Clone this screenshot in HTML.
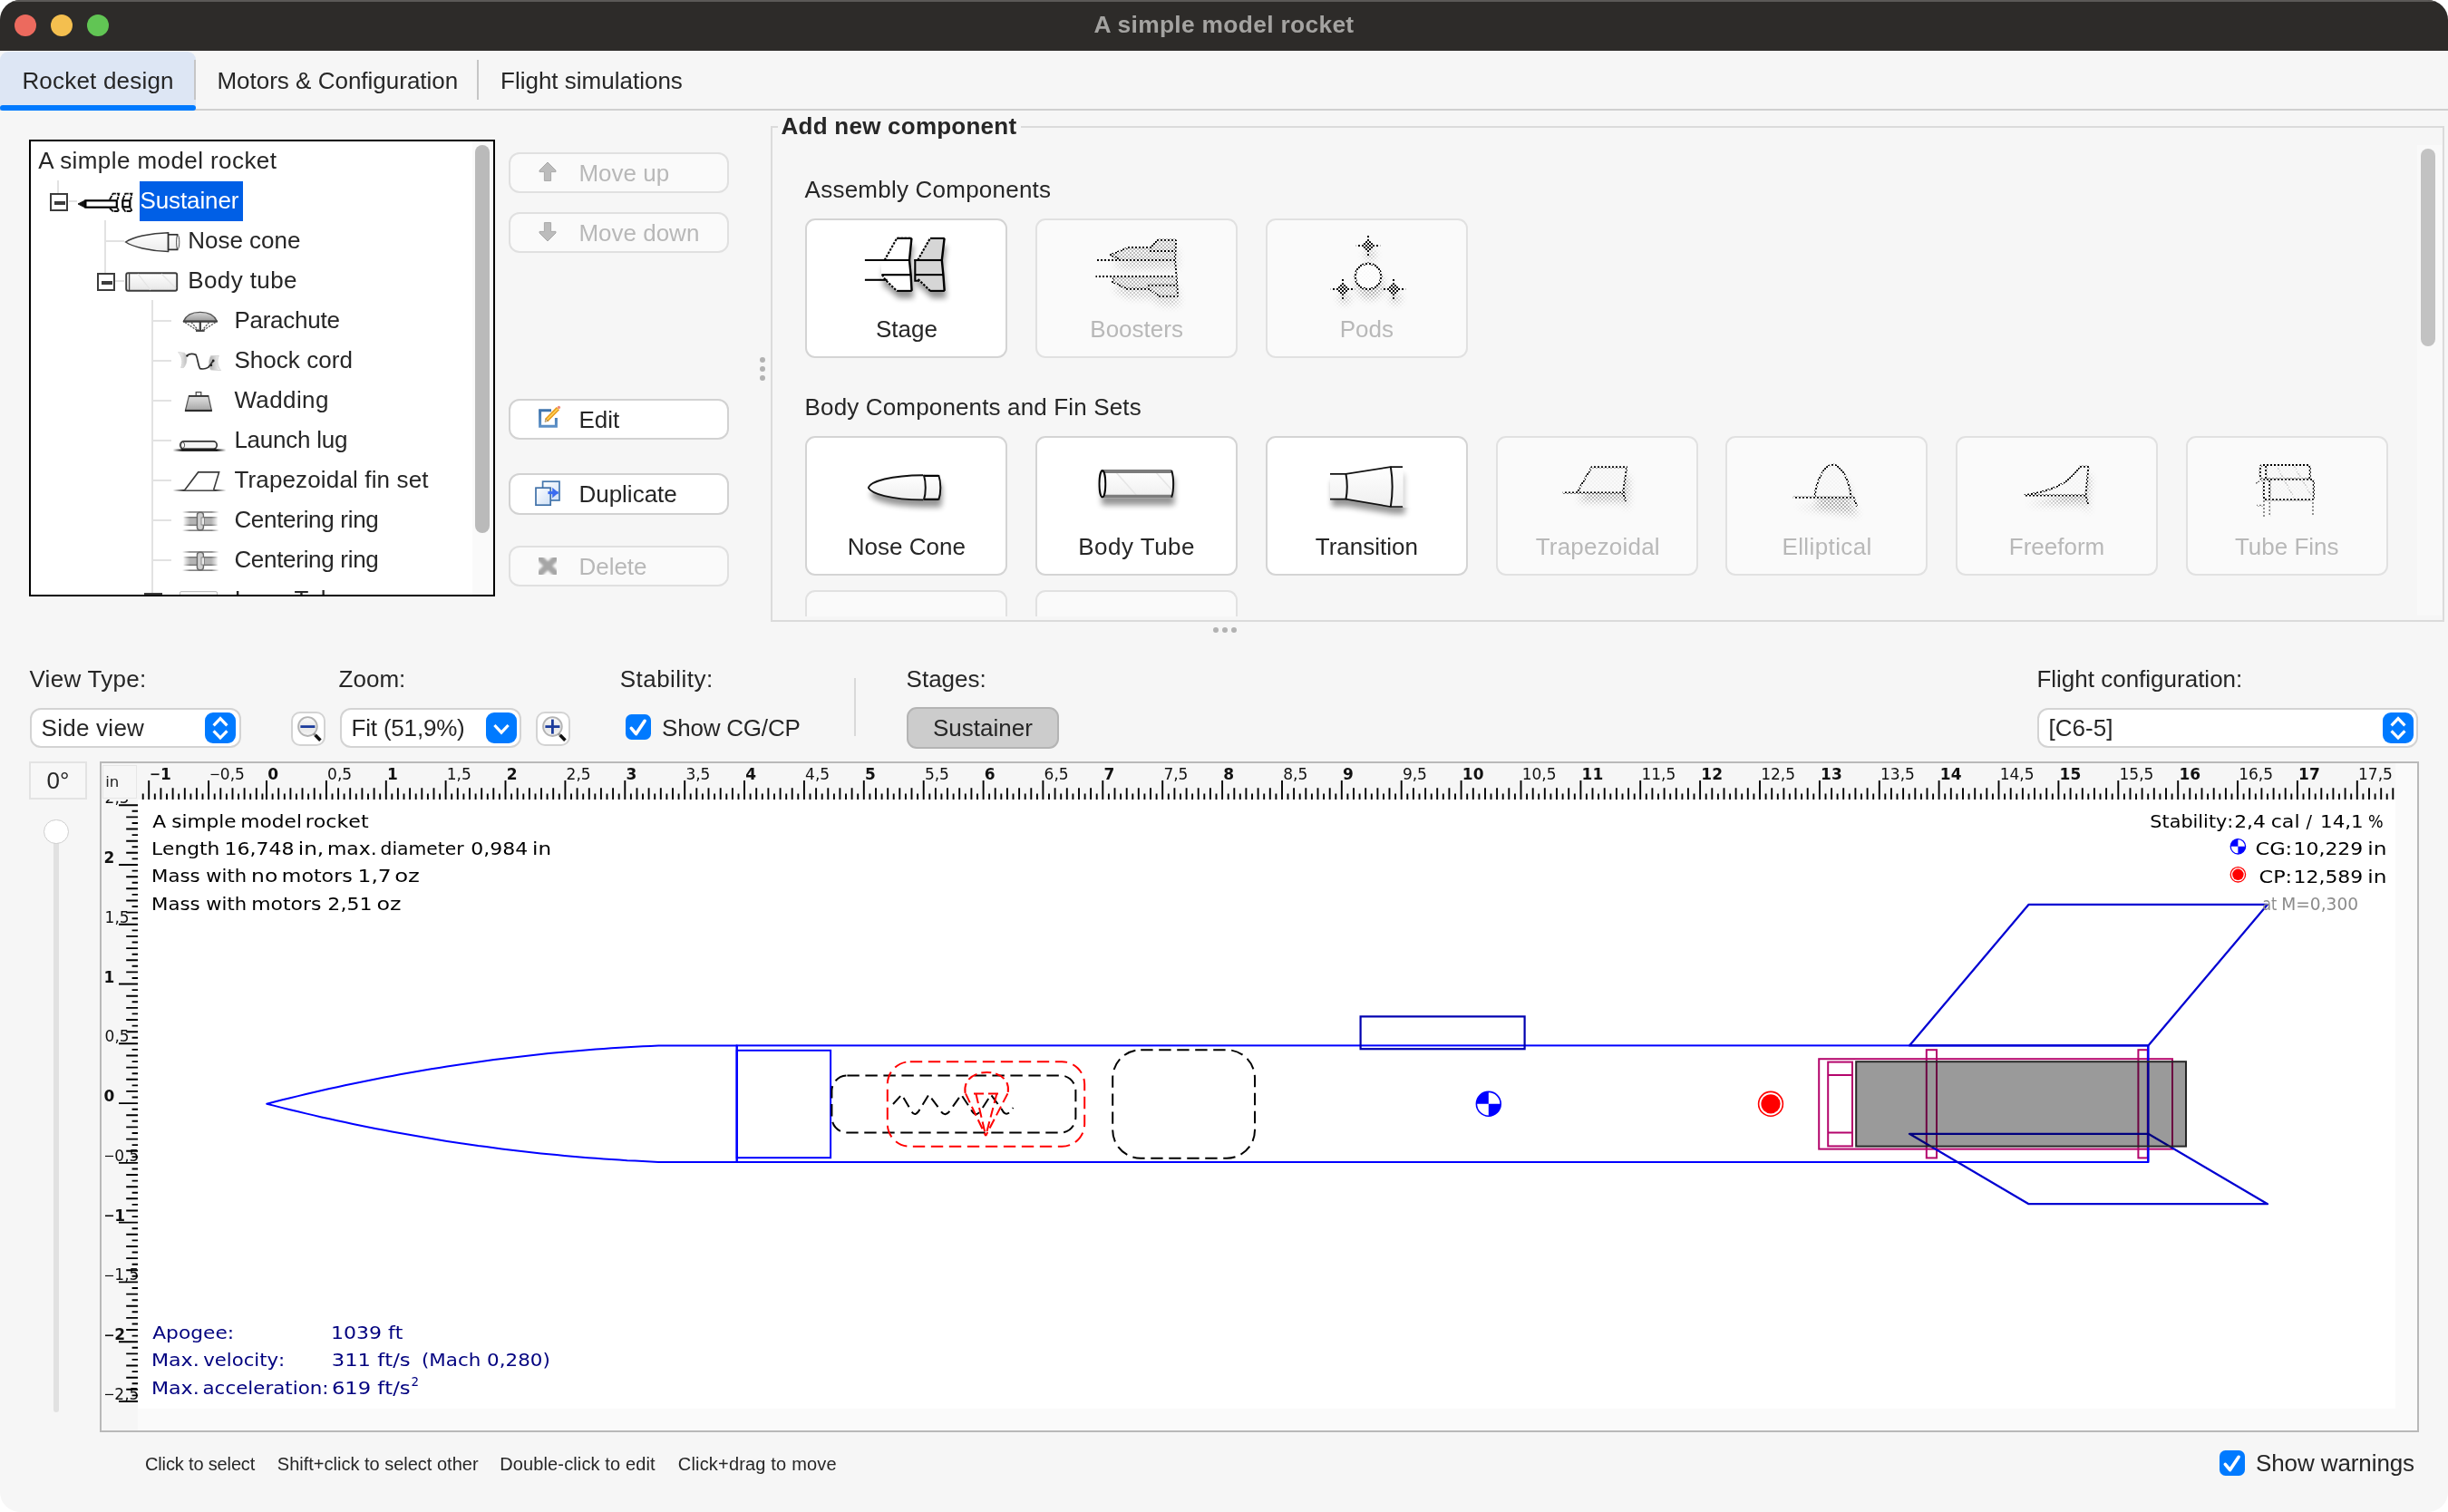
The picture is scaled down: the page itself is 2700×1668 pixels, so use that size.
<!DOCTYPE html>
<html lang="en"><head><meta charset="utf-8"><title>A simple model rocket</title>
<style>
*{box-sizing:border-box}
html,body{margin:0;padding:0}
body{width:2700px;height:1668px;background:#fff;overflow:hidden;position:relative;font-family:'Liberation Sans',sans-serif;color:#262626}
#win{will-change:transform;position:absolute;left:0;top:0;width:2700px;height:1668px;background:#f6f6f6;border-radius:22px;overflow:hidden}
.t{position:absolute;white-space:pre;line-height:1}
.abs{position:absolute}
svg{position:absolute;overflow:visible}
.btn{position:absolute;border:2px solid #d2d2d2;border-radius:12px;background:#fff}
.btn.dis{border-color:#e0e0e0;background:#fafafa}
.cbtn{position:absolute;border:2px solid #d4d4d4;border-radius:11px;background:#fff}
.cbtn.dis{border-color:#e1e1e1;background:#fafafa}
</style></head>
<body>
<div id="win">
<div class="abs" style="left:0;top:0;width:2700px;height:56px;background:#2d2b29"></div>
<div class="abs" style="left:0;top:0;width:2700px;height:1.5px;background:#5b5957"></div>
<div class="abs" style="left:15.8px;top:15.8px;width:24.4px;height:24.4px;border-radius:50%;background:#ec6a5e"></div>
<div class="abs" style="left:55.8px;top:15.8px;width:24.4px;height:24.4px;border-radius:50%;background:#f4bf4f"></div>
<div class="abs" style="left:95.8px;top:15.8px;width:24.4px;height:24.4px;border-radius:50%;background:#61c554"></div>
<div class="t" style="top:14.05px;font-size:26.4px;left:1050.00px;width:600px;text-align:center;color:#a4a3a1;font-weight:bold;letter-spacing:0.3px;">A simple model rocket</div>
<div class="abs" style="left:0;top:56.6px;width:216px;height:62px;background:#dde6f4;border-radius:9px 9px 0 0"></div>
<div class="abs" style="left:0;top:120.4px;width:2700px;height:1.6px;background:#d0d0d0"></div>
<div class="abs" style="left:0;top:115.8px;width:216px;height:6px;background:#007aff;border-radius:3px"></div>
<div class="abs" style="left:214px;top:66px;width:1.6px;height:43.5px;background:#c6c6c6"></div>
<div class="abs" style="left:526px;top:66px;width:1.6px;height:43.5px;background:#c6c6c6"></div>
<div class="t" style="top:75.89px;font-size:26px;left:24.40px;letter-spacing:0.2px;">Rocket design</div>
<div class="t" style="top:75.89px;font-size:26px;left:239.40px;">Motors &amp; Configuration</div>
<div class="t" style="top:75.89px;font-size:26px;left:552.00px;">Flight simulations</div>
<div class="abs" style="left:32px;top:154.3px;width:514px;height:503.5px;border:2px solid #000;background:#fff;overflow:hidden">
<div class="abs" style="left:-34px;top:-156.3px;width:2700px;height:1668px">
<div class="abs" style="left:521px;top:156px;width:23px;height:500px;background:#fafafa"></div>
<div class="abs" style="left:524px;top:160px;width:16px;height:427.5px;border-radius:8px;background:#bababa"></div>
<div class="abs" style="left:153.9px;top:199.9px;width:114px;height:44.4px;background:#005fe6"></div>
<div class="abs" style="left:63.2px;top:199.0px;width:1.6px;height:14.0px;background:#e2e2e2"></div>
<div class="abs" style="left:75.6px;top:221.0px;width:9.4px;height:1.6px;background:#e2e2e2"></div>
<div class="abs" style="left:115.2px;top:243.0px;width:1.6px;height:58.0px;background:#e2e2e2"></div>
<div class="abs" style="left:116.0px;top:265.0px;width:20.8px;height:1.6px;background:#e2e2e2"></div>
<div class="abs" style="left:127.4px;top:309.1px;width:9.4px;height:1.6px;background:#e2e2e2"></div>
<div class="abs" style="left:167.2px;top:331.4px;width:1.6px;height:328.6px;background:#e2e2e2"></div>
<div class="abs" style="left:168.0px;top:353.0px;width:20.8px;height:1.6px;background:#e2e2e2"></div>
<div class="abs" style="left:168.0px;top:397.0px;width:20.8px;height:1.6px;background:#e2e2e2"></div>
<div class="abs" style="left:168.0px;top:441.0px;width:20.8px;height:1.6px;background:#e2e2e2"></div>
<div class="abs" style="left:168.0px;top:485.0px;width:20.8px;height:1.6px;background:#e2e2e2"></div>
<div class="abs" style="left:168.0px;top:529.0px;width:20.8px;height:1.6px;background:#e2e2e2"></div>
<div class="abs" style="left:168.0px;top:573.0px;width:20.8px;height:1.6px;background:#e2e2e2"></div>
<div class="abs" style="left:168.0px;top:617.0px;width:20.8px;height:1.6px;background:#e2e2e2"></div>
<div class="abs" style="left:55.2px;top:213.0px;width:19.6px;height:19.6px;border:2px solid #3c3c3c;background:#fff"></div><div class="abs" style="left:60.0px;top:221.8px;width:12px;height:4.2px;background:#3c3c3c"></div>
<div class="abs" style="left:107.2px;top:301.2px;width:19.6px;height:19.6px;border:2px solid #3c3c3c;background:#fff"></div><div class="abs" style="left:112.0px;top:310.0px;width:12px;height:4.2px;background:#3c3c3c"></div>
<div class="abs" style="left:159.3px;top:653.8px;width:19.6px;height:19.6px;border:2px solid #3c3c3c;background:#fff"></div><div class="abs" style="left:164.1px;top:662.6px;width:12px;height:4.2px;background:#3c3c3c"></div>
<svg style="left:85px;top:210px" width="62" height="26" viewBox="85 210 62 26">
<path d="M86,225 L93.5,221.2 L93.5,228.8 Z" fill="#111" stroke="#111" stroke-width="1"/>
<rect x="94.4" y="221.3" width="34.4" height="7.4" fill="#fff" stroke="#000" stroke-width="2.2"/>
<path d="M121,220.3 L124.6,213.6 L131.2,213.6 L129.6,220.3 M121,229.7 L124.6,233 L131.2,233 L129.6,229.7" fill="none" stroke="#111" stroke-width="1.9" stroke-dasharray="5 0.9"/>
<rect x="135.3" y="221.3" width="8" height="7" fill="#fff" stroke="#000" stroke-width="2.2"/>
<path d="M135.4,220.3 L138.2,213.6 L145.4,213.6 L144,220.3 M135.4,229.4 L138.2,233 L145.4,233 L144,229.4" fill="none" stroke="#111" stroke-width="1.9" stroke-dasharray="5 0.9"/>
</svg>
<svg style="left:137px;top:254px" width="62" height="26" viewBox="137 254 62 26">
<defs><linearGradient id="gn" x1="0" y1="0" x2="0" y2="1"><stop offset="0" stop-color="#fff"/><stop offset="1" stop-color="#ececec"/></linearGradient></defs>
<path d="M138.6,267 C146,262 165,257 185.6,256.8 L185.6,277.4 C165,277 146,272 138.6,267 Z" fill="url(#gn)" stroke="#3a3a3a" stroke-width="1.5"/>
<rect x="185.6" y="258.8" width="10" height="16.6" fill="url(#gn)" stroke="#2e2e2e" stroke-width="1.7"/>
<ellipse cx="196.2" cy="267.1" rx="1.6" ry="7.6" fill="#f4f4f4" stroke="#555" stroke-width="1"/>
</svg>
<svg style="left:137px;top:298px" width="62" height="26" viewBox="137 298 62 26">
<defs><linearGradient id="gt" x1="0" y1="0" x2="0" y2="1"><stop offset="0" stop-color="#fff"/><stop offset="1" stop-color="#e6e6e6"/></linearGradient></defs>
<rect x="139.2" y="301.2" width="56" height="19.6" rx="2" fill="url(#gt)" stroke="#3c3c3c" stroke-width="1.9"/>
<path d="M152,302 L166,320 M178,302 L194,318" stroke="#e4e4e4" stroke-width="1.2" fill="none"/>
<path d="M142.6,301.6 L142.6,320.4" stroke="#4a4a4a" stroke-width="1.3"/>
</svg>
<svg style="left:200px;top:342px" width="42" height="26" viewBox="200 342 42 26">
<defs><linearGradient id="gc" x1="0" y1="0" x2="0" y2="1"><stop offset="0" stop-color="#d8d8d8"/><stop offset="1" stop-color="#9a9a9a"/></linearGradient></defs>
<path d="M202.4,354.4 C206,346 214,344.4 220.8,344.4 C227.6,344.4 235.6,346 239.4,354.4 Z" fill="url(#gc)" stroke="#555" stroke-width="1.3"/>
<path d="M202,354.6 L239.8,354.6" stroke="#3c3c3c" stroke-width="2.2"/>
<path d="M204,355.6 L217.6,364.6 M237.6,355.6 L224,364.6 M211,355.6 L219,364.6 M230.6,355.6 L222.8,364.6" stroke="#555" stroke-width="1.3" stroke-dasharray="2.2 1.2"/>
<path d="M220.8,355 L220.8,365" stroke="#3c3c3c" stroke-width="2.2"/>
<path d="M216,365 L225.6,365" stroke="#3c3c3c" stroke-width="1.8"/>
</svg>
<svg style="left:194px;top:386px" width="52" height="26" viewBox="194 386 52 26">
<defs><linearGradient id="gs1" x1="0" y1="0" x2="1" y2="0"><stop offset="0" stop-color="#fff"/><stop offset="1" stop-color="#bbb"/></linearGradient>
<linearGradient id="gs2" x1="0" y1="0" x2="1" y2="0"><stop offset="0" stop-color="#aaa"/><stop offset="1" stop-color="#fff"/></linearGradient></defs>
<path d="M196.6,388.6 L203.6,389.4 C207.6,394 206,402 202.4,405.6 L199.6,405.6 C202,400 201,393 196.6,388.6 Z" fill="url(#gs1)" stroke="#cfcfcf" stroke-width="0.8"/>
<path d="M232.6,392.6 L241.4,392.4 C239,397 239.6,404 243.6,408.6 L232.4,408 C230,403 230,397 232.6,392.6 Z" fill="url(#gs2)" stroke="#cfcfcf" stroke-width="0.8"/>
<path d="M206,392.4 C209,390 213,390.2 216,391.4 C218.4,396 218,402 220.6,406.6 C224,407.4 227,407 229.6,405.4 C232,402.6 234,400 235.4,397.4" fill="none" stroke="#333" stroke-width="1.7"/>
<circle cx="206.4" cy="392.6" r="1.2" fill="#222"/><circle cx="235.2" cy="398" r="1.4" fill="#222"/><circle cx="233" cy="403" r="1.2" fill="#222"/>
</svg>
<svg style="left:202px;top:430px" width="34" height="26" viewBox="202 430 34 26">
<defs><linearGradient id="gw" x1="0" y1="0" x2="0" y2="1"><stop offset="0" stop-color="#e4e4e4"/><stop offset="1" stop-color="#a4a4a4"/></linearGradient></defs>
<rect x="216.2" y="432.6" width="5.6" height="4.6" fill="#f4f4f4" stroke="#444" stroke-width="1.2"/>
<path d="M208.4,436.8 L229.8,436.8 L233.4,453 L204.4,453 Z" fill="url(#gw)" stroke="#555" stroke-width="1.2"/>
<path d="M208,436.9 L230.2,436.9" stroke="#333" stroke-width="1.8"/>
<path d="M204,453 L233.8,453" stroke="#2e2e2e" stroke-width="2.2"/>
</svg>
<svg style="left:189px;top:480px" width="62" height="20" viewBox="189 480 62 20">
<defs><linearGradient id="gl" x1="0" y1="0" x2="1" y2="0"><stop offset="0" stop-color="#000" stop-opacity="0"/><stop offset="0.18" stop-color="#000"/><stop offset="0.82" stop-color="#000"/><stop offset="1" stop-color="#000" stop-opacity="0"/></linearGradient></defs>
<rect x="190.6" y="495.4" width="58.8" height="2.4" fill="url(#gl)"/>
<rect x="198.8" y="486.9" width="40.4" height="8.4" rx="4" fill="#f4f4f4" stroke="#333" stroke-width="1.7"/>
<ellipse cx="201.6" cy="491.1" rx="2" ry="3.2" fill="#fff" stroke="#555" stroke-width="1"/>
<path d="M200,495.6 L238,495.6" stroke="#222" stroke-width="1.6"/>
</svg>
<svg style="left:189px;top:518px" width="62" height="26" viewBox="189 518 62 26">
<defs><linearGradient id="gf" x1="0" y1="0" x2="1" y2="0"><stop offset="0" stop-color="#333" stop-opacity="0"/><stop offset="0.2" stop-color="#333"/><stop offset="0.8" stop-color="#333"/><stop offset="1" stop-color="#333" stop-opacity="0"/></linearGradient></defs>
<rect x="190.6" y="540" width="58.8" height="1.9" fill="url(#gf)"/>
<path d="M203.8,540.6 L218.6,520.9 L241.6,520.9 L235.6,540.6" fill="#fff" stroke="#3a3a3a" stroke-width="1.6"/>
</svg>
<svg style="left:199px;top:562px" width="46" height="26" viewBox="199 562 46 26">
<defs><linearGradient id="gr562" x1="0" y1="0" x2="1" y2="0"><stop offset="0" stop-color="#777" stop-opacity="0"/><stop offset="0.2" stop-color="#777"/><stop offset="0.8" stop-color="#777"/><stop offset="1" stop-color="#777" stop-opacity="0"/></linearGradient>
<linearGradient id="gq562" x1="0" y1="0" x2="1" y2="0"><stop offset="0" stop-color="#aaa" stop-opacity="0"/><stop offset="0.2" stop-color="#b4b4b4"/><stop offset="0.8" stop-color="#b4b4b4"/><stop offset="1" stop-color="#aaa" stop-opacity="0"/></linearGradient></defs>
<rect x="201" y="564.2" width="40.6" height="1.5" fill="url(#gr562)"/>
<rect x="201" y="584.4" width="40.6" height="1.5" fill="url(#gr562)"/>
<rect x="202" y="570.2" width="38.6" height="9.4" fill="url(#gq562)"/>
<rect x="202" y="570" width="38.6" height="1.5" fill="url(#gr562)"/>
<rect x="202" y="578.6" width="38.6" height="1.5" fill="url(#gr562)"/>
<rect x="217.4" y="565.2" width="7" height="19.6" rx="3" fill="#cfcfcf" stroke="#6a6a6a" stroke-width="1.4"/>
<rect x="222" y="571" width="3.4" height="8" fill="#e8e8e8" stroke="#777" stroke-width="0.8"/>
</svg>
<svg style="left:199px;top:606px" width="46" height="26" viewBox="199 606 46 26">
<defs><linearGradient id="gr606" x1="0" y1="0" x2="1" y2="0"><stop offset="0" stop-color="#777" stop-opacity="0"/><stop offset="0.2" stop-color="#777"/><stop offset="0.8" stop-color="#777"/><stop offset="1" stop-color="#777" stop-opacity="0"/></linearGradient>
<linearGradient id="gq606" x1="0" y1="0" x2="1" y2="0"><stop offset="0" stop-color="#aaa" stop-opacity="0"/><stop offset="0.2" stop-color="#b4b4b4"/><stop offset="0.8" stop-color="#b4b4b4"/><stop offset="1" stop-color="#aaa" stop-opacity="0"/></linearGradient></defs>
<rect x="201" y="608.2" width="40.6" height="1.5" fill="url(#gr606)"/>
<rect x="201" y="628.4" width="40.6" height="1.5" fill="url(#gr606)"/>
<rect x="202" y="614.2" width="38.6" height="9.4" fill="url(#gq606)"/>
<rect x="202" y="614" width="38.6" height="1.5" fill="url(#gr606)"/>
<rect x="202" y="622.6" width="38.6" height="1.5" fill="url(#gr606)"/>
<rect x="217.4" y="609.2" width="7" height="19.6" rx="3" fill="#cfcfcf" stroke="#6a6a6a" stroke-width="1.4"/>
<rect x="222" y="615" width="3.4" height="8" fill="#e8e8e8" stroke="#777" stroke-width="0.8"/>
</svg>
<div class="abs" style="left:198px;top:652.4px;width:42px;height:10px;border:1.6px solid #bdbdbd;border-radius:2px;background:#f4f4f4"></div>
<div class="t" style="top:164.19px;font-size:26px;left:42.20px;letter-spacing:0.42px;">A simple model rocket</div>
<div class="t" style="top:208.19px;font-size:26px;left:154.40px;color:#fff;letter-spacing:-0.1px;">Sustainer</div>
<div class="t" style="top:252.19px;font-size:26px;left:207.20px;">Nose cone</div>
<div class="t" style="top:296.19px;font-size:26px;left:207.20px;letter-spacing:0.4px;">Body tube</div>
<div class="t" style="top:340.19px;font-size:26px;left:258.40px;letter-spacing:-0.25px;">Parachute</div>
<div class="t" style="top:384.19px;font-size:26px;left:258.40px;letter-spacing:0.05px;">Shock cord</div>
<div class="t" style="top:428.19px;font-size:26px;left:258.40px;letter-spacing:0.4px;">Wadding</div>
<div class="t" style="top:472.19px;font-size:26px;left:258.40px;letter-spacing:-0.25px;">Launch lug</div>
<div class="t" style="top:516.19px;font-size:26px;left:258.40px;letter-spacing:0.15px;">Trapezoidal fin set</div>
<div class="t" style="top:560.19px;font-size:26px;left:258.40px;letter-spacing:-0.3px;">Centering ring</div>
<div class="t" style="top:604.19px;font-size:26px;left:258.40px;letter-spacing:-0.3px;">Centering ring</div>
<div class="t" style="top:648.19px;font-size:26px;left:258.40px;">Inner Tube</div>
</div></div>
<div class="btn dis" style="left:560.5px;top:168.4px;width:243px;height:45.0px"></div>
<div class="btn dis" style="left:560.5px;top:234.3px;width:243px;height:44.89999999999998px"></div>
<div class="btn" style="left:560.5px;top:440.3px;width:243px;height:45.0px"></div>
<div class="btn" style="left:560.5px;top:522.4px;width:243px;height:45.200000000000045px"></div>
<div class="btn dis" style="left:560.5px;top:602.4px;width:243px;height:45.0px"></div>
<svg style="left:593px;top:178.3px" width="22" height="24" viewBox="-11 -1 22 24">
<path d="M0,0 L9,9 L9,10.6 L3.6,10.6 L3.6,20.4 L-3.6,20.4 L-3.6,10.6 L-9,10.6 L-9,9 Z" fill="#bcbcbc" stroke="#a9a9a9" stroke-width="1"/></svg>
<svg style="left:593px;top:242.8px" width="22" height="24" viewBox="-11 -23 22 24">
<path d="M0,0 L9,-9 L9,-10.6 L3.6,-10.6 L3.6,-20.4 L-3.6,-20.4 L-3.6,-10.6 L-9,-10.6 L-9,-9 Z" fill="#bcbcbc" stroke="#a9a9a9" stroke-width="1"/></svg>
<svg style="left:592px;top:446px" width="28" height="28" viewBox="592 446 28 28">
<defs><linearGradient id="ge" x1="0" y1="0" x2="0" y2="1"><stop offset="0" stop-color="#3f74ad"/><stop offset="1" stop-color="#5b8fc6"/></linearGradient></defs>
<path d="M608,452.8 L595.6,452.8 L595.6,470.2 L613.4,470.2 L613.4,461" fill="#fff" stroke="url(#ge)" stroke-width="3"/>
<path d="M602.6,463.6 L615.4,450.6" stroke="#e89a1c" stroke-width="4.6" stroke-linecap="butt"/>
<path d="M603.2,463 L615.2,451" stroke="#ffd45a" stroke-width="1.6"/>
<path d="M601,465.4 L604.4,464.4 L602,462 Z" fill="#f4d9a8" stroke="#8a6a3a" stroke-width="0.6"/>
<circle cx="616.4" cy="449.4" r="1.7" fill="#f08a7a"/>
</svg>
<svg style="left:588px;top:528px" width="32" height="32" viewBox="588 528 32 32">
<defs><linearGradient id="gd" x1="0" y1="0" x2="1" y2="1"><stop offset="0" stop-color="#ffffff"/><stop offset="1" stop-color="#cfe0f6"/></linearGradient></defs>
<rect x="598.6" y="531.2" width="18.4" height="20.8" fill="url(#gd)" stroke="#4577ad" stroke-width="1.7"/>
<rect x="591" y="538.2" width="16.2" height="19" fill="url(#gd)" stroke="#3f70a8" stroke-width="1.7"/>
<path d="M604.4,543.6 L615.6,543.6" stroke="#3a6cf0" stroke-width="3"/>
<path d="M609.2,537.8 L615.8,543.6 L609.2,549.4 Z" fill="#3a6cf0"/>
</svg>
<svg style="left:588px;top:608px" width="32" height="32" viewBox="588 608 32 32">
<defs><filter id="bl"><feGaussianBlur stdDeviation="1.1"/></filter></defs>
<path d="M596.4,616.6 L612,631.8 M612,616.6 L596.4,631.8" stroke="#a6a6a6" stroke-width="7" stroke-linecap="square" filter="url(#bl)"/>
</svg>
<div class="t" style="top:177.79px;font-size:26px;left:638.40px;color:#b8b8b8;">Move up</div>
<div class="t" style="top:243.59px;font-size:26px;left:638.40px;color:#b8b8b8;">Move down</div>
<div class="t" style="top:449.59px;font-size:26px;left:638.40px;">Edit</div>
<div class="t" style="top:531.79px;font-size:26px;left:638.40px;">Duplicate</div>
<div class="t" style="top:611.79px;font-size:26px;left:638.40px;color:#b8b8b8;">Delete</div>
<div class="abs" style="left:838px;top:394px;width:6px;height:6px;border-radius:50%;background:#b2b2b2"></div>
<div class="abs" style="left:838px;top:404px;width:6px;height:6px;border-radius:50%;background:#b2b2b2"></div>
<div class="abs" style="left:838px;top:414px;width:6px;height:6px;border-radius:50%;background:#b2b2b2"></div>
<div class="abs" style="left:1338px;top:692px;width:6px;height:6px;border-radius:50%;background:#b2b2b2"></div>
<div class="abs" style="left:1348px;top:692px;width:6px;height:6px;border-radius:50%;background:#b2b2b2"></div>
<div class="abs" style="left:1358px;top:692px;width:6px;height:6px;border-radius:50%;background:#b2b2b2"></div>
<svg width="0" height="0" style="left:0;top:0"><defs>
<pattern id="chk" x="0" y="0" width="4" height="4" patternUnits="userSpaceOnUse"><rect x="0" y="0" width="2" height="2" fill="#fff"/><rect x="2" y="2" width="2" height="2" fill="#fff"/></pattern>
<mask id="mchk" maskUnits="userSpaceOnUse" x="0" y="0" width="2700" height="1668"><rect x="0" y="0" width="2700" height="1668" fill="url(#chk)"/></mask>
<filter id="sh" x="-30%" y="-30%" width="160%" height="190%"><feGaussianBlur in="SourceAlpha" stdDeviation="3.2"/><feOffset dx="1.5" dy="7.5" result="o"/><feComponentTransfer><feFuncA type="linear" slope="0.42"/></feComponentTransfer><feMerge><feMergeNode/><feMergeNode in="SourceGraphic"/></feMerge></filter>
<filter id="shs" x="-30%" y="-30%" width="160%" height="220%"><feGaussianBlur in="SourceAlpha" stdDeviation="4"/><feOffset dx="1.5" dy="9.5"/><feComponentTransfer><feFuncA type="linear" slope="0.3"/></feComponentTransfer></filter>
<linearGradient id="gwh" x1="0" y1="0" x2="0" y2="1"><stop offset="0" stop-color="#fff"/><stop offset="1" stop-color="#efefef"/></linearGradient>
</defs></svg>
<div class="abs" style="left:850.4px;top:139.4px;width:1845.6px;height:546.6px;border:2px solid #dbdbdb"></div>
<div class="abs" style="left:858px;top:130px;width:268px;height:20px;background:#f6f6f6"></div>
<div class="t" style="top:125.79px;font-size:26px;left:861.60px;font-weight:bold;letter-spacing:0.24px;">Add new component</div>
<div class="t" style="top:195.99px;font-size:26px;left:887.60px;letter-spacing:0.23px;">Assembly Components</div>
<div class="t" style="top:436.39px;font-size:26px;left:887.60px;letter-spacing:0.15px;">Body Components and Fin Sets</div>
<div class="abs" style="left:2666px;top:160px;width:26.5px;height:519px;background:#f9f9f9"></div>
<div class="abs" style="left:2670px;top:163.8px;width:16px;height:218.4px;border-radius:8px;background:#c2c2c2"></div>
<div class="cbtn" style="left:888.4px;top:240.7px;width:223.0px;height:154.60000000000002px;"></div>
<div class="t" style="top:349.59px;font-size:26px;left:699.90px;width:600px;text-align:center;">Stage</div>
<div class="cbtn dis" style="left:1142.1px;top:240.7px;width:223.0px;height:154.60000000000002px;"></div>
<div class="t" style="top:349.59px;font-size:26px;left:953.62px;width:600px;text-align:center;color:#b8b8b8;">Boosters</div>
<div class="cbtn dis" style="left:1395.8px;top:240.7px;width:223.0px;height:154.60000000000002px;"></div>
<div class="t" style="top:349.59px;font-size:26px;left:1207.34px;width:600px;text-align:center;color:#b8b8b8;">Pods</div>
<div class="cbtn" style="left:888.4px;top:480.7px;width:223.0px;height:154.00000000000006px;"></div>
<div class="t" style="top:589.89px;font-size:26px;left:699.90px;width:600px;text-align:center;">Nose Cone</div>
<div class="cbtn" style="left:1142.1px;top:480.7px;width:223.0px;height:154.00000000000006px;"></div>
<div class="t" style="top:589.89px;font-size:26px;left:953.62px;width:600px;text-align:center;letter-spacing:0.5px;">Body Tube</div>
<div class="cbtn" style="left:1395.8px;top:480.7px;width:223.0px;height:154.00000000000006px;"></div>
<div class="t" style="top:589.89px;font-size:26px;left:1207.34px;width:600px;text-align:center;">Transition</div>
<div class="cbtn dis" style="left:1649.6px;top:480.7px;width:223.0px;height:154.00000000000006px;"></div>
<div class="t" style="top:589.89px;font-size:26px;left:1462.26px;width:600px;text-align:center;color:#b8b8b8;letter-spacing:0.2px;">Trapezoidal</div>
<div class="cbtn dis" style="left:1903.3px;top:480.7px;width:223.0px;height:154.00000000000006px;"></div>
<div class="t" style="top:589.89px;font-size:26px;left:1715.08px;width:600px;text-align:center;color:#b8b8b8;letter-spacing:0.4px;">Elliptical</div>
<div class="cbtn dis" style="left:2157.0px;top:480.7px;width:223.0px;height:154.00000000000006px;"></div>
<div class="t" style="top:589.89px;font-size:26px;left:1968.50px;width:600px;text-align:center;color:#b8b8b8;">Freeform</div>
<div class="cbtn dis" style="left:2410.7px;top:480.7px;width:223.0px;height:154.00000000000006px;"></div>
<div class="t" style="top:589.89px;font-size:26px;left:2222.22px;width:600px;text-align:center;color:#b8b8b8;">Tube Fins</div>
<div class="cbtn dis" style="left:888.4px;top:651px;width:223.0px;height:28.5px;border-radius:11px 11px 0 0;border-bottom:none;"></div>
<div class="cbtn dis" style="left:1142.1px;top:651px;width:223.0px;height:28.5px;border-radius:11px 11px 0 0;border-bottom:none;"></div>
<svg style="left:940px;top:250px" width="120" height="100" viewBox="940 250 120 100"><g filter="url(#sh)">
<path d="M972,287 H1003 L1004.6,303.1 L1005.7,320.9 H989.2 L975,308.8 H972 Z" fill="#fff"/>
<path d="M975.6,287 L989.2,262.9 H1005.7 L1003,287 Z" fill="#fff"/>
<path d="M1009.2,287 H1012 L1025.9,262.9 H1041.8 L1038.8,287 L1040.4,303.1 L1041.8,320.9 H1026 L1013,308.8 H1009.2 Z" fill="#d6d6d6"/>
</g>
<g stroke="#000" stroke-width="2.1" fill="none" stroke-linejoin="miter">
<path d="M953.9,287 H1003.6"/><path d="M972.4,303.1 H1004.4"/><path d="M953.9,308.8 H978.6"/>
<path d="M975.6,287 L989.2,262.9 H1005.6" stroke-dasharray="2.6 1.4"/>
<path d="M989.2,262.9 H1005.6"/>
<path d="M1005.4,262.9 L1003,287 L1004.6,303.1 L1005.6,320.9" stroke-width="2.4"/>
<path d="M973,303.1 L976.4,308.6 L989.2,320.9" stroke-dasharray="2.6 1.4"/>
<path d="M989.2,320.9 H1005.7"/>
<path d="M1012.2,287 L1025.9,262.9" stroke-dasharray="2.6 1.4"/>
<path d="M1025.9,262.9 H1041.8"/>
<path d="M1041.6,262.9 L1038.8,287 L1040.4,303.1 L1041.7,320.9" stroke-width="2.4"/>
<path d="M1008.4,287 H1039"/><path d="M1009.4,303.1 H1040.4"/>
<path d="M1009.3,286 V309.8 H1014" />
<path d="M1012.6,308 L1026,320.9" stroke-dasharray="2.6 1.4"/>
<path d="M1026,320.9 H1041.8"/>
</g></svg>
<svg style="left:1195px;top:250px" width="130" height="100" viewBox="1195 250 130 100"><g mask="url(#mchk)"><g filter="url(#shs)" opacity="0.7"><path d="M1236.3,287 L1224.7,281 L1244.9,272.9 H1269.4 L1276.6,264.8 H1297.1 V287 Z M1215,305 H1229 L1226.7,310.8 L1242.9,318.7 H1267.4 L1278.6,327 H1299.1 L1297,305 Z" fill="#000"/></g>
<path d="M1236.3,287 L1224.7,281 L1244.9,272.9 H1269.4 L1276.6,264.8 H1297.1 V287 Z" fill="#bdbdbd"/>
<path d="M1229,305 L1226.7,310.8 L1242.9,318.7 H1267.4 L1278.6,327 H1299.1 L1297,305 Z" fill="#bdbdbd"/>
<g stroke="#000" stroke-width="2" fill="none">
<path d="M1209.8,287 H1295.6"/>
<path d="M1236.3,287 L1224.7,281 L1244.9,272.9 H1269.4 L1276.6,264.8 H1297.1"/>
<path d="M1269.4,272.9 L1268.7,277.1 H1297"/>
<path d="M1297.1,264.8 L1296,287 L1297.6,305 L1299.1,327"/>
<path d="M1208.5,305 H1294"/>
<path d="M1229,305 L1226.7,310.8 L1242.9,318.7 H1267.4 L1278.6,327 H1299.1"/>
<path d="M1267.4,318.7 L1266.7,314.8 H1297.4"/>
</g></g></svg>
<svg style="left:1455px;top:250px" width="110" height="100" viewBox="1455 250 110 100"><g mask="url(#mchk)"><g filter="url(#shs)"><circle cx="1509" cy="304.9" r="15" fill="#000"/><circle cx="1509" cy="270.9" r="6" fill="#000"/><circle cx="1481" cy="318.9" r="6" fill="#000"/><circle cx="1537.1" cy="318.9" r="6" fill="#000"/></g>
<g stroke="#000" stroke-width="2" fill="none"><circle cx="1509" cy="271" r="4.4" fill="#d0d0d0" stroke-width="2.2"/><path d="M1495.8,271 H1522.2 M1509,258 V284"/><circle cx="1481" cy="319" r="4.4" fill="#d0d0d0" stroke-width="2.2"/><path d="M1467.8,319 H1494.2 M1481,306 V332"/><circle cx="1537" cy="319" r="4.4" fill="#d0d0d0" stroke-width="2.2"/><path d="M1523.8,319 H1550.2 M1537,306 V332"/>
<circle cx="1509" cy="304.9" r="14.2" fill="#fff" stroke-width="2.4"/></g></g></svg>
<svg style="left:945px;top:505px" width="110" height="80" viewBox="945 505 110 80"><g filter="url(#sh)">
<path d="M957.6,537.8 C961,531 982,524.4 1018.3,524.2 H1035.6 C1037.6,531 1037.6,545 1035.6,551.4 H1018.3 C982,551.2 961,544.6 957.6,537.8 Z" fill="url(#gwh)"/></g>
<path d="M957.6,537.8 C961,531 982,524.4 1018.3,524.2 M957.6,537.8 C961,544.6 982,551.2 1018.3,551.4" fill="none" stroke="#111" stroke-width="1.9"/>
<path d="M1018.8,524.9 H1035 M1018.8,550.8 H1035" stroke="#000" stroke-width="2.2" fill="none"/>
<path d="M1018.9,524 C1021.4,532 1021.4,544 1018.9,551.6" stroke="#111" stroke-width="2" fill="none"/>
<path d="M1035.2,524 C1038,532 1038,544 1035.2,551.6" stroke="#111" stroke-width="2" fill="none"/></svg>
<svg style="left:1195px;top:500px" width="120" height="80" viewBox="1195 500 120 80"><g filter="url(#sh)"><rect x="1213" y="518.4" width="80.4" height="30.8" rx="2" fill="url(#gwh)"/></g>
<path d="M1230,520 L1254,547 M1274,520 L1292,540" stroke="#e6e6e6" stroke-width="1.6" fill="none"/>
<path d="M1214.4,520 H1292.4 M1214.4,547.6 H1292.4" stroke="#7c7c7c" stroke-width="3.8" fill="none"/>
<ellipse cx="1215.9" cy="533.8" rx="3.4" ry="14.6" fill="#f4f4f4" stroke="#000" stroke-width="1.9"/>
<path d="M1292.2,519 C1294.8,527 1294.8,541 1292.2,548.6" stroke="#111" stroke-width="2" fill="none"/></svg>
<svg style="left:1450px;top:495px" width="130" height="90" viewBox="1450 495 130 90"><g filter="url(#sh)"><path d="M1467,522.9 H1484 L1534,515.1 H1547.6 V559 H1534 L1484,550.7 H1467 Z" fill="url(#gwh)"/></g>
<path d="M1547.8,514 V560 H1560 V514 Z" fill="#fff" opacity="0.55"/>
<g stroke="#111" stroke-width="1.7" fill="none">
<path d="M1467,522.9 H1484.4 L1533.6,515.1 H1547"/>
<path d="M1467,550.7 H1484.4 L1533.6,559 H1547"/>
<path d="M1484.4,522.4 C1486,531 1486,543 1484.4,551.2" stroke-width="2"/>
<path d="M1533.8,514.6 C1536,528 1536,546 1533.8,559.4" stroke-width="2"/>
</g></svg>
<svg style="left:1710px;top:500px" width="110" height="80" viewBox="1710 500 110 80"><g mask="url(#mchk)"><g filter="url(#shs)"><path d="M1723.7,543.6 H1739.2 L1755.6,515.3 H1794.8 L1793.4,553 L1789,543.6 Z" fill="#000"/></g>
<path d="M1739.2,543.6 L1755.6,515.3 H1794.8 L1789,543.6 Z" fill="#f2f2f2"/>
<g stroke="#000" stroke-width="2" fill="none">
<path d="M1723.7,543.6 H1793"/><path d="M1739.2,543.6 L1755.6,515.3 H1794.8"/><path d="M1794.2,515.3 L1790,543.6 L1793.2,553"/></g></g></svg>
<svg style="left:1965px;top:500px" width="110" height="80" viewBox="1965 500 110 80"><g mask="url(#mchk)"><g filter="url(#shs)"><path d="M1977.8,548.8 H2001.5 C2003,530 2012,513 2021.4,512.5 C2031,513 2040,530 2041.5,548.8 L2048,558.6 Z" fill="#000"/></g>
<path d="M2001.5,548.8 C2003,530 2012,513 2021.4,512.5 C2031,513 2040,530 2041.5,548.8 Z" fill="#f4f4f4"/>
<g stroke="#000" stroke-width="2" fill="none">
<path d="M1977.8,548.8 H2044.4 L2048,558.6"/><path d="M2001.5,548.8 C2003,530 2012,513 2021.4,512.5 C2031,513 2040,530 2041.5,548.8"/></g></g></svg>
<svg style="left:2220px;top:500px" width="110" height="80" viewBox="2220 500 110 80"><g mask="url(#mchk)"><g filter="url(#shs)"><path d="M2232.7,546.4 C2262,542 2282,534 2294,514.8 H2303.8 L2300.6,546.4 L2303,556.2 L2296,546.4 Z" fill="#000"/></g>
<path d="M2232.7,546.4 C2262,542 2282,534 2294,514.8 H2303.8 L2300.6,546.4 Z" fill="#f4f4f4"/>
<g stroke="#000" stroke-width="2" fill="none">
<path d="M2232.7,546.4 H2300"/><path d="M2232.7,546.4 C2262,542 2282,534 2294,514.8 H2303.8"/><path d="M2303.4,514.8 L2300.4,546.4 L2303,556.2"/></g></g></svg>
<svg style="left:2480px;top:500px" width="110" height="80" viewBox="2480 500 110 80"><g mask="url(#mchk)"><g stroke="#000" stroke-width="2" fill="#f4f4f4">
<rect x="2492.8" y="512.9" width="55" height="15.8" rx="3"/>
<rect x="2496.8" y="528.7" width="55" height="22.6" rx="3"/>
<path d="M2499.2,513 V528.7 M2503.3,529 V551.3" fill="none"/>
</g>
<g stroke="#777" stroke-width="1.6" fill="none"><path d="M2497,551.3 V570 M2503.3,551.3 V570 M2551,551.3 V570 M2487.6,533.3 L2497,528.7 M2489,557.6 H2497"/>
<path d="M2512,516 L2530,549 M2530,514 L2549,546" stroke="#ccc"/></g></g></svg>
<div class="t" style="top:736.19px;font-size:26px;left:32.40px;letter-spacing:0.3px;">View Type:</div>
<div class="t" style="top:736.19px;font-size:26px;left:373.60px;">Zoom:</div>
<div class="t" style="top:736.19px;font-size:26px;left:683.80px;letter-spacing:0.45px;">Stability:</div>
<div class="t" style="top:736.19px;font-size:26px;left:999.60px;">Stages:</div>
<div class="t" style="top:736.19px;font-size:26px;left:2246.40px;">Flight configuration:</div>
<div class="abs" style="left:32.6px;top:780.6px;width:233.00000000000003px;height:44.60000000000002px;border:2px solid #d3d3d3;border-radius:12px;background:#fff"></div>
<div class="abs" style="left:226.20000000000005px;top:786px;width:34px;height:33.8px;border-radius:9px;background:#007aff"></div>
<svg style="left:226.20000000000005px;top:786px" width="34" height="34" viewBox="226.20000000000005 786 34 34"><path d="M235.80000000000004,800.3 L243.20000000000005,792.6 L250.60000000000005,800.3 M235.80000000000004,806.3 L243.20000000000005,814 L250.60000000000005,806.3" fill="none" stroke="#fff" stroke-width="3.2"/></svg>
<div class="t" style="top:789.79px;font-size:26px;left:45.60px;letter-spacing:0.25px;">Side view</div>
<div class="abs" style="left:320.7px;top:784.6px;width:38.6px;height:38.6px;border:2px solid #d3d3d3;border-radius:10px;background:#fff"></div>
<svg style="left:320.7px;top:784px" width="40" height="40" viewBox="320.7 784 40 40">
<defs><linearGradient id="gz320" x1="0" y1="0" x2="0" y2="1"><stop offset="0" stop-color="#fdfdfd"/><stop offset="0.55" stop-color="#e6e6e6"/><stop offset="1" stop-color="#f6f6f6"/></linearGradient></defs>
<circle cx="339.09999999999997" cy="801.6" r="10.4" fill="url(#gz320)" stroke="#b4b4b4" stroke-width="1.8"/>
<rect x="331.09999999999997" y="800.2" width="16" height="2.8" fill="#1c3c9c"/>
<path d="M345.7,809.2 L348.09999999999997,811.6" stroke="#999" stroke-width="3"/>
<path d="M347.49999999999994,811.0 L353.09999999999997,816.8000000000001" stroke="#111" stroke-width="3.6"/>
</svg>
<div class="abs" style="left:374.6px;top:780.6px;width:200.79999999999995px;height:44.60000000000002px;border:2px solid #d3d3d3;border-radius:12px;background:#fff"></div>
<div class="abs" style="left:536.0px;top:786px;width:34px;height:33.8px;border-radius:9px;background:#007aff"></div>
<svg style="left:536.0px;top:786px" width="34" height="34" viewBox="536.0 786 34 34"><path d="M545.4,800 L553.0,808.2 L560.6,800" fill="none" stroke="#fff" stroke-width="3.2"/></svg>
<div class="t" style="top:789.79px;font-size:26px;left:387.60px;letter-spacing:-0.2px;">Fit (51,9%)</div>
<div class="abs" style="left:590.6px;top:784.6px;width:38.6px;height:38.6px;border:2px solid #d3d3d3;border-radius:10px;background:#fff"></div>
<svg style="left:590.6px;top:784px" width="40" height="40" viewBox="590.6 784 40 40">
<defs><linearGradient id="gz590" x1="0" y1="0" x2="0" y2="1"><stop offset="0" stop-color="#fdfdfd"/><stop offset="0.55" stop-color="#e6e6e6"/><stop offset="1" stop-color="#f6f6f6"/></linearGradient></defs>
<circle cx="609.0" cy="801.6" r="10.4" fill="url(#gz590)" stroke="#b4b4b4" stroke-width="1.8"/>
<rect x="601.0" y="800.2" width="16" height="2.8" fill="#1c3c9c"/><rect x="607.6" y="793.6" width="2.8" height="16" fill="#1c3c9c"/>
<path d="M615.6,809.2 L618.0,811.6" stroke="#999" stroke-width="3"/>
<path d="M617.4,811.0 L623.0,816.8000000000001" stroke="#111" stroke-width="3.6"/>
</svg>
<div class="abs" style="left:689.8px;top:787.7px;width:28.2px;height:28.2px;border-radius:6.5px;background:#007aff"></div>
<svg style="left:689.8px;top:787.7px" width="28" height="28" viewBox="0 0 28 28"><path d="M6.3,15.4 L11.6,21.6 L21.1,7.3" fill="none" stroke="#fff" stroke-width="3.6" stroke-linecap="round" stroke-linejoin="round"/></svg>
<div class="t" style="top:789.99px;font-size:26px;left:730.00px;letter-spacing:-0.2px;">Show CG/CP</div>
<div class="abs" style="left:942.4px;top:748px;width:1.8px;height:64px;background:#d9d9d9"></div>
<div class="abs" style="left:1000.2px;top:780.4px;width:167.4px;height:45.4px;border:2px solid #b4b4b4;border-radius:11px;background:#cccccc"></div>
<div class="t" style="top:789.99px;font-size:26px;left:783.90px;width:600px;text-align:center;">Sustainer</div>
<div class="abs" style="left:2246.6px;top:780.6px;width:420.8000000000002px;height:44.60000000000002px;border:2px solid #d3d3d3;border-radius:12px;background:#fff"></div>
<div class="abs" style="left:2628.0px;top:786px;width:34px;height:33.8px;border-radius:9px;background:#007aff"></div>
<svg style="left:2628.0px;top:786px" width="34" height="34" viewBox="2628.0 786 34 34"><path d="M2637.6,800.3 L2645.0,792.6 L2652.4,800.3 M2637.6,806.3 L2645.0,814 L2652.4,806.3" fill="none" stroke="#fff" stroke-width="3.2"/></svg>
<div class="t" style="top:789.79px;font-size:26px;left:2259.60px;">[C6-5]</div>
<div class="abs" style="left:110px;top:840px;width:2557.8px;height:740px;border:2px solid #b9b9b9;background:#fafafa"></div>
<div class="abs" style="left:112.2px;top:842.2px;width:2530px;height:40px;background:#f6f6f6"></div>
<div class="abs" style="left:112.2px;top:842.2px;width:40px;height:735.6px;background:#f6f6f6"></div>
<div class="abs" style="left:152px;top:882px;width:2490.2px;height:672px;background:#fff"></div>
<div class="abs" style="left:113px;top:843.6px;width:38px;height:37px;border:1.6px solid #e6e6e6;background:#f6f6f6"></div>
<div class="abs" style="left:32px;top:840px;width:63.8px;height:42px;border:2px solid #e3e3e3;background:#f7f7f7"></div>
<div class="t" style="top:847.59px;font-size:26px;left:-236.10px;width:600px;text-align:center;">0°</div>
<div class="abs" style="left:59px;top:918px;width:6px;height:640px;border-radius:3px;background:#e1e1e1"></div>
<div class="abs" style="left:48.4px;top:904.2px;width:27.2px;height:27.2px;border-radius:50%;background:#fff;border:1.7px solid #cdcdcd"></div>
<svg style="left:0;top:0" width="2700" height="1668" viewBox="0 0 2700 1668"><g font-family="'DejaVu Sans',sans-serif"><text x="116.2" y="867.6" font-size="16.6" fill="#222">in</text></g>
<clipPath id="cv"><rect x="112" y="882" width="40" height="672"/></clipPath><g font-family="'DejaVu Sans',sans-serif" fill="#111" clip-path="url(#cv)"><text x="114.2" y="1544.0" font-size="17"><tspan font-size="14.5" dy="-0.6">−</tspan><tspan dy="0.6">2,5</tspan></text><text x="114.2" y="1478.2" font-size="17" font-weight="bold"><tspan font-size="14.5" dy="-0.6">−</tspan><tspan dy="0.6">2</tspan></text><text x="114.2" y="1412.4" font-size="17"><tspan font-size="14.5" dy="-0.6">−</tspan><tspan dy="0.6">1,5</tspan></text><text x="114.2" y="1346.6" font-size="17" font-weight="bold"><tspan font-size="14.5" dy="-0.6">−</tspan><tspan dy="0.6">1</tspan></text><text x="114.2" y="1280.9" font-size="17"><tspan font-size="14.5" dy="-0.6">−</tspan><tspan dy="0.6">0,5</tspan></text><text x="114.6" y="1215.1" font-size="17" font-weight="bold">0</text><text x="115.6" y="1149.3" font-size="17">0,5</text><text x="114.6" y="1083.5" font-size="17" font-weight="bold">1</text><text x="115.6" y="1017.8" font-size="17">1,5</text><text x="114.6" y="952.0" font-size="17" font-weight="bold">2</text><text x="115.6" y="886.2" font-size="17">2,5</text></g><path d="M131,1546.0H152M145.6,1539.4H152M139.2,1532.8H152M145.6,1526.2H152M139.2,1519.7H152M145.6,1513.1H152M139.2,1506.5H152M145.6,1499.9H152M139.2,1493.4H152M145.6,1486.8H152M131,1480.2H152M145.6,1473.6H152M139.2,1467.0H152M145.6,1460.5H152M139.2,1453.9H152M145.6,1447.3H152M139.2,1440.7H152M145.6,1434.2H152M139.2,1427.6H152M145.6,1421.0H152M131,1414.4H152M145.6,1407.8H152M139.2,1401.3H152M145.6,1394.7H152M139.2,1388.1H152M145.6,1381.5H152M139.2,1375.0H152M145.6,1368.4H152M139.2,1361.8H152M145.6,1355.2H152M131,1348.6H152M145.6,1342.1H152M139.2,1335.5H152M145.6,1328.9H152M139.2,1322.3H152M145.6,1315.8H152M139.2,1309.2H152M145.6,1302.6H152M139.2,1296.0H152M145.6,1289.5H152M131,1282.9H152M145.6,1276.3H152M139.2,1269.7H152M145.6,1263.1H152M139.2,1256.6H152M145.6,1250.0H152M139.2,1243.4H152M145.6,1236.8H152M139.2,1230.3H152M145.6,1223.7H152M131,1217.1H152M145.6,1210.5H152M139.2,1203.9H152M145.6,1197.4H152M139.2,1190.8H152M145.6,1184.2H152M139.2,1177.6H152M145.6,1171.1H152M139.2,1164.5H152M145.6,1157.9H152M131,1151.3H152M145.6,1144.7H152M139.2,1138.2H152M145.6,1131.6H152M139.2,1125.0H152M145.6,1118.4H152M139.2,1111.9H152M145.6,1105.3H152M139.2,1098.7H152M145.6,1092.1H152M131,1085.5H152M145.6,1079.0H152M139.2,1072.4H152M145.6,1065.8H152M139.2,1059.2H152M145.6,1052.7H152M139.2,1046.1H152M145.6,1039.5H152M139.2,1032.9H152M145.6,1026.4H152M131,1019.8H152M145.6,1013.2H152M139.2,1006.6H152M145.6,1000.0H152M139.2,993.5H152M145.6,986.9H152M139.2,980.3H152M145.6,973.7H152M139.2,967.2H152M145.6,960.6H152M131,954.0H152M145.6,947.4H152M139.2,940.8H152M145.6,934.3H152M139.2,927.7H152M145.6,921.1H152M139.2,914.5H152M145.6,908.0H152M139.2,901.4H152M145.6,894.8H152M131,888.2H152" stroke="#000" stroke-width="1.9" fill="none"/>
<path d="M164.2,861V882M230.1,861V882M294.0,861V882M359.9,861V882M425.8,861V882M491.6,861V882M557.5,861V882M623.4,861V882M689.3,861V882M755.2,861V882M821.0,861V882M886.9,861V882M952.8,861V882M1018.7,861V882M1084.6,861V882M1150.4,861V882M1216.3,861V882M1282.2,861V882M1348.1,861V882M1414.0,861V882M1479.8,861V882M1545.7,861V882M1611.6,861V882M1677.5,861V882M1743.4,861V882M1809.2,861V882M1875.1,861V882M1941.0,861V882M2006.9,861V882M2072.8,861V882M2138.6,861V882M2204.5,861V882M2270.4,861V882M2336.3,861V882M2402.2,861V882M2468.0,861V882M2533.9,861V882M2599.8,861V882M177.4,869.2V882M190.6,869.2V882M203.8,869.2V882M216.9,869.2V882M243.3,869.2V882M256.5,869.2V882M269.6,869.2V882M282.8,869.2V882M307.2,869.2V882M320.4,869.2V882M333.5,869.2V882M346.7,869.2V882M373.1,869.2V882M386.2,869.2V882M399.4,869.2V882M412.6,869.2V882M438.9,869.2V882M452.1,869.2V882M465.3,869.2V882M478.5,869.2V882M504.8,869.2V882M518.0,869.2V882M531.2,869.2V882M544.3,869.2V882M570.7,869.2V882M583.9,869.2V882M597.0,869.2V882M610.2,869.2V882M636.6,869.2V882M649.8,869.2V882M662.9,869.2V882M676.1,869.2V882M702.5,869.2V882M715.6,869.2V882M728.8,869.2V882M742.0,869.2V882M768.3,869.2V882M781.5,869.2V882M794.7,869.2V882M807.9,869.2V882M834.2,869.2V882M847.4,869.2V882M860.6,869.2V882M873.7,869.2V882M900.1,869.2V882M913.3,869.2V882M926.4,869.2V882M939.6,869.2V882M966.0,869.2V882M979.2,869.2V882M992.3,869.2V882M1005.5,869.2V882M1031.9,869.2V882M1045.0,869.2V882M1058.2,869.2V882M1071.4,869.2V882M1097.7,869.2V882M1110.9,869.2V882M1124.1,869.2V882M1137.3,869.2V882M1163.6,869.2V882M1176.8,869.2V882M1190.0,869.2V882M1203.1,869.2V882M1229.5,869.2V882M1242.7,869.2V882M1255.8,869.2V882M1269.0,869.2V882M1295.4,869.2V882M1308.6,869.2V882M1321.7,869.2V882M1334.9,869.2V882M1361.3,869.2V882M1374.4,869.2V882M1387.6,869.2V882M1400.8,869.2V882M1427.1,869.2V882M1440.3,869.2V882M1453.5,869.2V882M1466.7,869.2V882M1493.0,869.2V882M1506.2,869.2V882M1519.4,869.2V882M1532.5,869.2V882M1558.9,869.2V882M1572.1,869.2V882M1585.2,869.2V882M1598.4,869.2V882M1624.8,869.2V882M1638.0,869.2V882M1651.1,869.2V882M1664.3,869.2V882M1690.7,869.2V882M1703.8,869.2V882M1717.0,869.2V882M1730.2,869.2V882M1756.5,869.2V882M1769.7,869.2V882M1782.9,869.2V882M1796.1,869.2V882M1822.4,869.2V882M1835.6,869.2V882M1848.8,869.2V882M1861.9,869.2V882M1888.3,869.2V882M1901.5,869.2V882M1914.6,869.2V882M1927.8,869.2V882M1954.2,869.2V882M1967.4,869.2V882M1980.5,869.2V882M1993.7,869.2V882M2020.1,869.2V882M2033.2,869.2V882M2046.4,869.2V882M2059.6,869.2V882M2085.9,869.2V882M2099.1,869.2V882M2112.3,869.2V882M2125.5,869.2V882M2151.8,869.2V882M2165.0,869.2V882M2178.2,869.2V882M2191.3,869.2V882M2217.7,869.2V882M2230.9,869.2V882M2244.0,869.2V882M2257.2,869.2V882M2283.6,869.2V882M2296.8,869.2V882M2309.9,869.2V882M2323.1,869.2V882M2349.5,869.2V882M2362.6,869.2V882M2375.8,869.2V882M2389.0,869.2V882M2415.3,869.2V882M2428.5,869.2V882M2441.7,869.2V882M2454.9,869.2V882M2481.2,869.2V882M2494.4,869.2V882M2507.6,869.2V882M2520.7,869.2V882M2547.1,869.2V882M2560.3,869.2V882M2573.4,869.2V882M2586.6,869.2V882M2613.0,869.2V882M2626.2,869.2V882M2639.3,869.2V882M157.7,875.4V882M170.8,875.4V882M184.0,875.4V882M197.2,875.4V882M210.4,875.4V882M223.5,875.4V882M236.7,875.4V882M249.9,875.4V882M263.1,875.4V882M276.2,875.4V882M289.4,875.4V882M300.6,875.4V882M313.8,875.4V882M326.9,875.4V882M340.1,875.4V882M353.3,875.4V882M366.5,875.4V882M379.6,875.4V882M392.8,875.4V882M406.0,875.4V882M419.2,875.4V882M432.3,875.4V882M445.5,875.4V882M458.7,875.4V882M471.9,875.4V882M485.1,875.4V882M498.2,875.4V882M511.4,875.4V882M524.6,875.4V882M537.8,875.4V882M550.9,875.4V882M564.1,875.4V882M577.3,875.4V882M590.5,875.4V882M603.6,875.4V882M616.8,875.4V882M630.0,875.4V882M643.2,875.4V882M656.3,875.4V882M669.5,875.4V882M682.7,875.4V882M695.9,875.4V882M709.0,875.4V882M722.2,875.4V882M735.4,875.4V882M748.6,875.4V882M761.7,875.4V882M774.9,875.4V882M788.1,875.4V882M801.3,875.4V882M814.5,875.4V882M827.6,875.4V882M840.8,875.4V882M854.0,875.4V882M867.2,875.4V882M880.3,875.4V882M893.5,875.4V882M906.7,875.4V882M919.9,875.4V882M933.0,875.4V882M946.2,875.4V882M959.4,875.4V882M972.6,875.4V882M985.7,875.4V882M998.9,875.4V882M1012.1,875.4V882M1025.3,875.4V882M1038.4,875.4V882M1051.6,875.4V882M1064.8,875.4V882M1078.0,875.4V882M1091.1,875.4V882M1104.3,875.4V882M1117.5,875.4V882M1130.7,875.4V882M1143.9,875.4V882M1157.0,875.4V882M1170.2,875.4V882M1183.4,875.4V882M1196.6,875.4V882M1209.7,875.4V882M1222.9,875.4V882M1236.1,875.4V882M1249.3,875.4V882M1262.4,875.4V882M1275.6,875.4V882M1288.8,875.4V882M1302.0,875.4V882M1315.1,875.4V882M1328.3,875.4V882M1341.5,875.4V882M1354.7,875.4V882M1367.8,875.4V882M1381.0,875.4V882M1394.2,875.4V882M1407.4,875.4V882M1420.5,875.4V882M1433.7,875.4V882M1446.9,875.4V882M1460.1,875.4V882M1473.3,875.4V882M1486.4,875.4V882M1499.6,875.4V882M1512.8,875.4V882M1526.0,875.4V882M1539.1,875.4V882M1552.3,875.4V882M1565.5,875.4V882M1578.7,875.4V882M1591.8,875.4V882M1605.0,875.4V882M1618.2,875.4V882M1631.4,875.4V882M1644.5,875.4V882M1657.7,875.4V882M1670.9,875.4V882M1684.1,875.4V882M1697.2,875.4V882M1710.4,875.4V882M1723.6,875.4V882M1736.8,875.4V882M1749.9,875.4V882M1763.1,875.4V882M1776.3,875.4V882M1789.5,875.4V882M1802.7,875.4V882M1815.8,875.4V882M1829.0,875.4V882M1842.2,875.4V882M1855.4,875.4V882M1868.5,875.4V882M1881.7,875.4V882M1894.9,875.4V882M1908.1,875.4V882M1921.2,875.4V882M1934.4,875.4V882M1947.6,875.4V882M1960.8,875.4V882M1973.9,875.4V882M1987.1,875.4V882M2000.3,875.4V882M2013.5,875.4V882M2026.6,875.4V882M2039.8,875.4V882M2053.0,875.4V882M2066.2,875.4V882M2079.3,875.4V882M2092.5,875.4V882M2105.7,875.4V882M2118.9,875.4V882M2132.1,875.4V882M2145.2,875.4V882M2158.4,875.4V882M2171.6,875.4V882M2184.8,875.4V882M2197.9,875.4V882M2211.1,875.4V882M2224.3,875.4V882M2237.5,875.4V882M2250.6,875.4V882M2263.8,875.4V882M2277.0,875.4V882M2290.2,875.4V882M2303.3,875.4V882M2316.5,875.4V882M2329.7,875.4V882M2342.9,875.4V882M2356.0,875.4V882M2369.2,875.4V882M2382.4,875.4V882M2395.6,875.4V882M2408.7,875.4V882M2421.9,875.4V882M2435.1,875.4V882M2448.3,875.4V882M2461.5,875.4V882M2474.6,875.4V882M2487.8,875.4V882M2501.0,875.4V882M2514.2,875.4V882M2527.3,875.4V882M2540.5,875.4V882M2553.7,875.4V882M2566.9,875.4V882M2580.0,875.4V882M2593.2,875.4V882M2606.4,875.4V882M2619.6,875.4V882M2632.7,875.4V882" stroke="#000" stroke-width="1.9" fill="none"/><g font-family="'DejaVu Sans',sans-serif" fill="#111"><text x="164.8" y="859.7" font-size="17" font-weight="bold"><tspan font-size="14.5" dy="-0.6">−</tspan><tspan dy="0.6">1</tspan></text><text x="230.7" y="859.7" font-size="17"><tspan font-size="14.5" dy="-0.6">−</tspan><tspan dy="0.6">0,5</tspan></text><text x="295.2" y="859.7" font-size="17" font-weight="bold">0</text><text x="361.1" y="859.7" font-size="17">0,5</text><text x="427.0" y="859.7" font-size="17" font-weight="bold">1</text><text x="492.8" y="859.7" font-size="17">1,5</text><text x="558.7" y="859.7" font-size="17" font-weight="bold">2</text><text x="624.6" y="859.7" font-size="17">2,5</text><text x="690.5" y="859.7" font-size="17" font-weight="bold">3</text><text x="756.4" y="859.7" font-size="17">3,5</text><text x="822.2" y="859.7" font-size="17" font-weight="bold">4</text><text x="888.1" y="859.7" font-size="17">4,5</text><text x="954.0" y="859.7" font-size="17" font-weight="bold">5</text><text x="1019.9" y="859.7" font-size="17">5,5</text><text x="1085.8" y="859.7" font-size="17" font-weight="bold">6</text><text x="1151.6" y="859.7" font-size="17">6,5</text><text x="1217.5" y="859.7" font-size="17" font-weight="bold">7</text><text x="1283.4" y="859.7" font-size="17">7,5</text><text x="1349.3" y="859.7" font-size="17" font-weight="bold">8</text><text x="1415.2" y="859.7" font-size="17">8,5</text><text x="1481.0" y="859.7" font-size="17" font-weight="bold">9</text><text x="1546.9" y="859.7" font-size="17">9,5</text><text x="1612.8" y="859.7" font-size="17" font-weight="bold">10</text><text x="1678.7" y="859.7" font-size="17">10,5</text><text x="1744.6" y="859.7" font-size="17" font-weight="bold">11</text><text x="1810.4" y="859.7" font-size="17">11,5</text><text x="1876.3" y="859.7" font-size="17" font-weight="bold">12</text><text x="1942.2" y="859.7" font-size="17">12,5</text><text x="2008.1" y="859.7" font-size="17" font-weight="bold">13</text><text x="2074.0" y="859.7" font-size="17">13,5</text><text x="2139.8" y="859.7" font-size="17" font-weight="bold">14</text><text x="2205.7" y="859.7" font-size="17">14,5</text><text x="2271.6" y="859.7" font-size="17" font-weight="bold">15</text><text x="2337.5" y="859.7" font-size="17">15,5</text><text x="2403.4" y="859.7" font-size="17" font-weight="bold">16</text><text x="2469.2" y="859.7" font-size="17">16,5</text><text x="2535.1" y="859.7" font-size="17" font-weight="bold">17</text><text x="2601.0" y="859.7" font-size="17">17,5</text></g>
<g fill="none" stroke="#0000ff" stroke-width="2">
<path d="M294.2,1217.7 L302.8,1215.5 L311.5,1213.3 L320.1,1211.2 L328.8,1209.1 L337.4,1207.0 L346.1,1205.0 L354.7,1203.0 L363.3,1201.1 L372.0,1199.2 L380.6,1197.3 L389.3,1195.5 L397.9,1193.7 L406.5,1191.9 L415.2,1190.2 L423.8,1188.6 L432.5,1186.9 L441.1,1185.3 L449.8,1183.8 L458.4,1182.3 L467.0,1180.8 L475.7,1179.3 L484.3,1177.9 L493.0,1176.5 L501.6,1175.2 L510.2,1173.9 L518.9,1172.7 L527.5,1171.4 L536.2,1170.3 L544.8,1169.1 L553.5,1168.0 L562.1,1166.9 L570.7,1165.9 L579.4,1164.9 L588.0,1163.9 L596.7,1163.0 L605.3,1162.1 L613.9,1161.3 L622.6,1160.5 L631.2,1159.7 L639.9,1158.9 L648.5,1158.2 L657.1,1157.6 L665.8,1156.9 L674.4,1156.3 L683.1,1155.8 L691.7,1155.2 L700.4,1154.8 L709.0,1154.3 L717.6,1153.9 L726.3,1153.5 L734.9,1153.4 L743.6,1153.4 L752.2,1153.4 L760.8,1153.4 L769.5,1153.4 L778.1,1153.4 L786.8,1153.4 L795.4,1153.4 L804.1,1153.4 L812.7,1153.4 L812.7,1282.0 L804.1,1282.0 L795.4,1282.0 L786.8,1282.0 L778.1,1282.0 L769.5,1282.0 L760.8,1282.0 L752.2,1282.0 L743.6,1282.0 L734.9,1282.0 L726.3,1281.9 L717.6,1281.5 L709.0,1281.1 L700.4,1280.6 L691.7,1280.2 L683.1,1279.6 L674.4,1279.1 L665.8,1278.5 L657.1,1277.8 L648.5,1277.2 L639.9,1276.5 L631.2,1275.7 L622.6,1274.9 L613.9,1274.1 L605.3,1273.3 L596.7,1272.4 L588.0,1271.5 L579.4,1270.5 L570.7,1269.5 L562.1,1268.5 L553.5,1267.4 L544.8,1266.3 L536.2,1265.1 L527.5,1264.0 L518.9,1262.7 L510.2,1261.5 L501.6,1260.2 L493.0,1258.9 L484.3,1257.5 L475.7,1256.1 L467.0,1254.6 L458.4,1253.1 L449.8,1251.6 L441.1,1250.1 L432.5,1248.5 L423.8,1246.8 L415.2,1245.2 L406.5,1243.5 L397.9,1241.7 L389.3,1239.9 L380.6,1238.1 L372.0,1236.2 L363.3,1234.3 L354.7,1232.4 L346.1,1230.4 L337.4,1228.4 L328.8,1226.3 L320.1,1224.2 L311.5,1222.1 L302.8,1219.9 L294.2,1217.7Z" stroke-linejoin="round"/>
<rect x="812.7" y="1153.4" width="1556.6" height="128.6"/>
<rect x="812.7" y="1158.8" width="103.4" height="118.4"/>
</g>
<rect x="1500.6" y="1121.4" width="181" height="35.8" fill="none" stroke="#0000b0" stroke-width="2.2"/>
<g fill="none" stroke-width="2" stroke-dasharray="13.4 6.6">
<rect x="917.4" y="1186.4" width="269" height="63.2" rx="17" stroke="#000"/>
<rect x="978.8" y="1171.2" width="217.4" height="93.6" rx="25" stroke="#ff0000"/>
<rect x="1227.2" y="1158.2" width="156.8" height="119.6" rx="31" stroke="#000"/>
</g>
<path d="M985,1218 L994.6,1207.6 L1003.6,1223 Q1008.6,1234.4 1014.4,1224 L1024.4,1207.6 L1036.6,1224 Q1042,1234.4 1048.6,1224 L1060.2,1207.6 L1071,1224 Q1076,1234.4 1082.6,1224 L1093,1207.6 L1105,1224 Q1110,1234.4 1117.4,1222" fill="none" stroke="#000" stroke-width="2" stroke-dasharray="12 6"/>
<g fill="none" stroke="#ff0000" stroke-width="2" stroke-dasharray="11 5">
<path d="M1064.6,1206 C1062,1190 1076,1183 1088.4,1183 C1101,1183 1114.6,1190 1111.6,1206"/>
<path d="M1074,1206.4 H1104"/>
<path d="M1065,1206.4 L1087.2,1253 M1111.4,1206.4 L1087.2,1253 M1076.4,1206.4 L1087.2,1253 M1099.4,1206.4 L1087.2,1253"/>
</g>
<g fill="none" stroke="#b4056c" stroke-width="2">
<rect x="2006.2" y="1168.2" width="389.8" height="99.4"/>
<rect x="2016.2" y="1171.6" width="26.8" height="92.8"/>
<path d="M2016.2,1186 H2043 M2016.2,1249.6 H2043"/>
<rect x="2124.8" y="1158.2" width="11.2" height="119.2"/>
<rect x="2358.4" y="1158.2" width="10.4" height="119.2"/>
</g>
<path d="M2369.3,1153.4 V1281.8" stroke="#0000ff" stroke-width="2.2" fill="none"/>
<g fill="none" stroke="#0000d2" stroke-width="2.25" stroke-linejoin="round">
<path d="M2106,1153.4 L2237.6,997.8 H2501 L2369.4,1153.4 Z"/>
<path d="M2106,1250.8 H2369.4 L2501,1328.2 H2237.6 Z"/>
</g>
<rect x="2047.2" y="1171.2" width="363.8" height="93.4" fill="#000" fill-opacity="0.395" stroke="#262626" stroke-width="2"/>
<circle cx="1641.8" cy="1217.8" r="13.4" fill="#fff" stroke="#0000ff" stroke-width="1.6"/><path d="M1641.8,1217.8 L1641.8,1204.3999999999999 A13.4,13.4 0 0 0 1628.3999999999999,1217.8 Z M1641.8,1217.8 L1641.8,1231.2 A13.4,13.4 0 0 0 1655.2,1217.8 Z" fill="#0000ff"/>
<circle cx="1953" cy="1217.8" r="13.4" fill="#fff" stroke="#ff0000" stroke-width="1.6"/><circle cx="1953" cy="1217.8" r="10.6" fill="#ff0000"/>
<g font-family="'DejaVu Sans',sans-serif" style="font-kerning:none">
<text x="168.23" y="912.6" font-size="20" fill="#000" textLength="14.95" lengthAdjust="spacingAndGlyphs">A</text><text x="189.23" y="912.6" font-size="20" fill="#000" textLength="71.32" lengthAdjust="spacingAndGlyphs">simple</text><text x="265.33" y="912.6" font-size="20" fill="#000" textLength="67.61" lengthAdjust="spacingAndGlyphs">model</text><text x="336.69" y="912.6" font-size="20" fill="#000" textLength="69.94" lengthAdjust="spacingAndGlyphs">rocket</text>
<text x="166.97" y="942.8" font-size="20" fill="#000" textLength="75.38" lengthAdjust="spacingAndGlyphs">Length</text><text x="247.58" y="942.8" font-size="20" fill="#000" textLength="76.92" lengthAdjust="spacingAndGlyphs">16,748</text><text x="328.72" y="942.8" font-size="20" fill="#000" textLength="28.44" lengthAdjust="spacingAndGlyphs">in,</text><text x="361.01" y="942.8" font-size="20" fill="#000" textLength="54.65" lengthAdjust="spacingAndGlyphs">max.</text><text x="419.58" y="942.8" font-size="20" fill="#000" textLength="92.12" lengthAdjust="spacingAndGlyphs">diameter</text><text x="519.25" y="942.8" font-size="20" fill="#000" textLength="62.88" lengthAdjust="spacingAndGlyphs">0,984</text><text x="587.03" y="942.8" font-size="20" fill="#000" textLength="21.03" lengthAdjust="spacingAndGlyphs">in</text>
<text x="167.01" y="973.2" font-size="20" fill="#000" textLength="53.63" lengthAdjust="spacingAndGlyphs">Mass</text><text x="227.32" y="973.2" font-size="20" fill="#000" textLength="44.67" lengthAdjust="spacingAndGlyphs">with</text><text x="277.07" y="973.2" font-size="20" fill="#000" textLength="29.21" lengthAdjust="spacingAndGlyphs">no</text><text x="310.89" y="973.2" font-size="20" fill="#000" textLength="77.89" lengthAdjust="spacingAndGlyphs">motors</text><text x="394.53" y="973.2" font-size="20" fill="#000" textLength="37.16" lengthAdjust="spacingAndGlyphs">1,7</text><text x="435.16" y="973.2" font-size="20" fill="#000" textLength="27.69" lengthAdjust="spacingAndGlyphs">oz</text>
<text x="167.01" y="1003.6" font-size="20" fill="#000" textLength="53.63" lengthAdjust="spacingAndGlyphs">Mass</text><text x="227.32" y="1003.6" font-size="20" fill="#000" textLength="44.67" lengthAdjust="spacingAndGlyphs">with</text><text x="277.21" y="1003.6" font-size="20" fill="#000" textLength="77.16" lengthAdjust="spacingAndGlyphs">motors</text><text x="361.39" y="1003.6" font-size="20" fill="#000" textLength="49.05" lengthAdjust="spacingAndGlyphs">2,51</text><text x="415.59" y="1003.6" font-size="20" fill="#000" textLength="27.03" lengthAdjust="spacingAndGlyphs">oz</text>
<text x="2371.33" y="912.6" font-size="20" fill="#000" textLength="91.99" lengthAdjust="spacingAndGlyphs">Stability:</text><text x="2464.20" y="912.6" font-size="20" fill="#000" textLength="34.73" lengthAdjust="spacingAndGlyphs">2,4</text><text x="2504.68" y="912.6" font-size="20" fill="#000" textLength="31.90" lengthAdjust="spacingAndGlyphs">cal</text><text x="2543.50" y="912.6" font-size="20" fill="#000" textLength="6.50" lengthAdjust="spacingAndGlyphs">/</text><text x="2559.05" y="912.6" font-size="20" fill="#000" textLength="47.62" lengthAdjust="spacingAndGlyphs">14,1</text><text x="2611.93" y="912.6" font-size="20" fill="#000" textLength="16.63" lengthAdjust="spacingAndGlyphs">%</text>
<text x="2487.44" y="942.8" font-size="20" fill="#000" textLength="40.69" lengthAdjust="spacingAndGlyphs">CG:</text><text x="2529.59" y="942.8" font-size="20" fill="#000" textLength="76.65" lengthAdjust="spacingAndGlyphs">10,229</text><text x="2611.21" y="942.8" font-size="20" fill="#000" textLength="21.16" lengthAdjust="spacingAndGlyphs">in</text>
<text x="2491.55" y="973.8" font-size="20" fill="#000" textLength="36.56" lengthAdjust="spacingAndGlyphs">CP:</text><text x="2529.59" y="973.8" font-size="20" fill="#000" textLength="76.65" lengthAdjust="spacingAndGlyphs">12,589</text><text x="2611.21" y="973.8" font-size="20" fill="#000" textLength="21.16" lengthAdjust="spacingAndGlyphs">in</text>
<text x="2495.14" y="1004" font-size="19" fill="#8c8c8c" textLength="16.04" lengthAdjust="spacingAndGlyphs">at</text><text x="2516.28" y="1004" font-size="19" fill="#8c8c8c" textLength="84.76" lengthAdjust="spacingAndGlyphs">M=0,300</text>
<text x="168.23" y="1477" font-size="20" fill="#00007f" textLength="89.91" lengthAdjust="spacingAndGlyphs">Apogee:</text><text x="365.08" y="1477" font-size="20" fill="#00007f" textLength="79.34" lengthAdjust="spacingAndGlyphs">1039 ft</text>
<text x="166.92" y="1507.2" font-size="20" fill="#00007f" textLength="52.87" lengthAdjust="spacingAndGlyphs">Max.</text><text x="224.17" y="1507.2" font-size="20" fill="#00007f" textLength="90.11" lengthAdjust="spacingAndGlyphs">velocity:</text><text x="365.77" y="1507.2" font-size="20" fill="#00007f" textLength="86.84" lengthAdjust="spacingAndGlyphs">311 ft/s</text><text x="464.96" y="1507.2" font-size="20" fill="#00007f" textLength="141.88" lengthAdjust="spacingAndGlyphs">(Mach 0,280)</text>
<text x="166.92" y="1538" font-size="20" fill="#00007f" textLength="52.87" lengthAdjust="spacingAndGlyphs">Max.</text><text x="223.51" y="1538" font-size="20" fill="#00007f" textLength="139.08" lengthAdjust="spacingAndGlyphs">acceleration:</text><text x="365.92" y="1538" font-size="20" fill="#00007f" textLength="86.69" lengthAdjust="spacingAndGlyphs">619 ft/s</text>
<text x="453.6" y="1529.4" font-size="13.4" fill="#00007f">2</text>
</g>
<circle cx="2468.4" cy="933.8" r="8.2" fill="#fff" stroke="#0000ff" stroke-width="1.3"/><path d="M2468.4,933.8 L2468.4,925.5999999999999 A8.2,8.2 0 0 0 2460.2000000000003,933.8 Z M2468.4,933.8 L2468.4,942.0 A8.2,8.2 0 0 0 2476.6,933.8 Z" fill="#0000ff"/>
<circle cx="2468.4" cy="964.8" r="8.2" fill="#fff" stroke="#ff0000" stroke-width="1.3"/><circle cx="2468.4" cy="964.8" r="6.2" fill="#ff0000"/></svg>
<div class="t" style="top:1604.87px;font-size:20px;left:160.00px;letter-spacing:-0.15px;">Click to select</div>
<div class="t" style="top:1604.87px;font-size:20px;left:305.80px;">Shift+click to select other</div>
<div class="t" style="top:1604.87px;font-size:20px;left:551.20px;letter-spacing:0.13px;">Double-click to edit</div>
<div class="t" style="top:1604.87px;font-size:20px;left:747.80px;letter-spacing:0.18px;">Click+drag to move</div>
<div class="abs" style="left:2447.9px;top:1600px;width:28.2px;height:28.2px;border-radius:6.5px;background:#007aff"></div>
<svg style="left:2447.9px;top:1600px" width="28" height="28" viewBox="0 0 28 28"><path d="M6.3,15.4 L11.6,21.6 L21.1,7.3" fill="none" stroke="#fff" stroke-width="3.6" stroke-linecap="round" stroke-linejoin="round"/></svg>
<div class="t" style="top:1601.39px;font-size:26px;left:2488.00px;letter-spacing:-0.1px;">Show warnings</div>
</div>
</body></html>
